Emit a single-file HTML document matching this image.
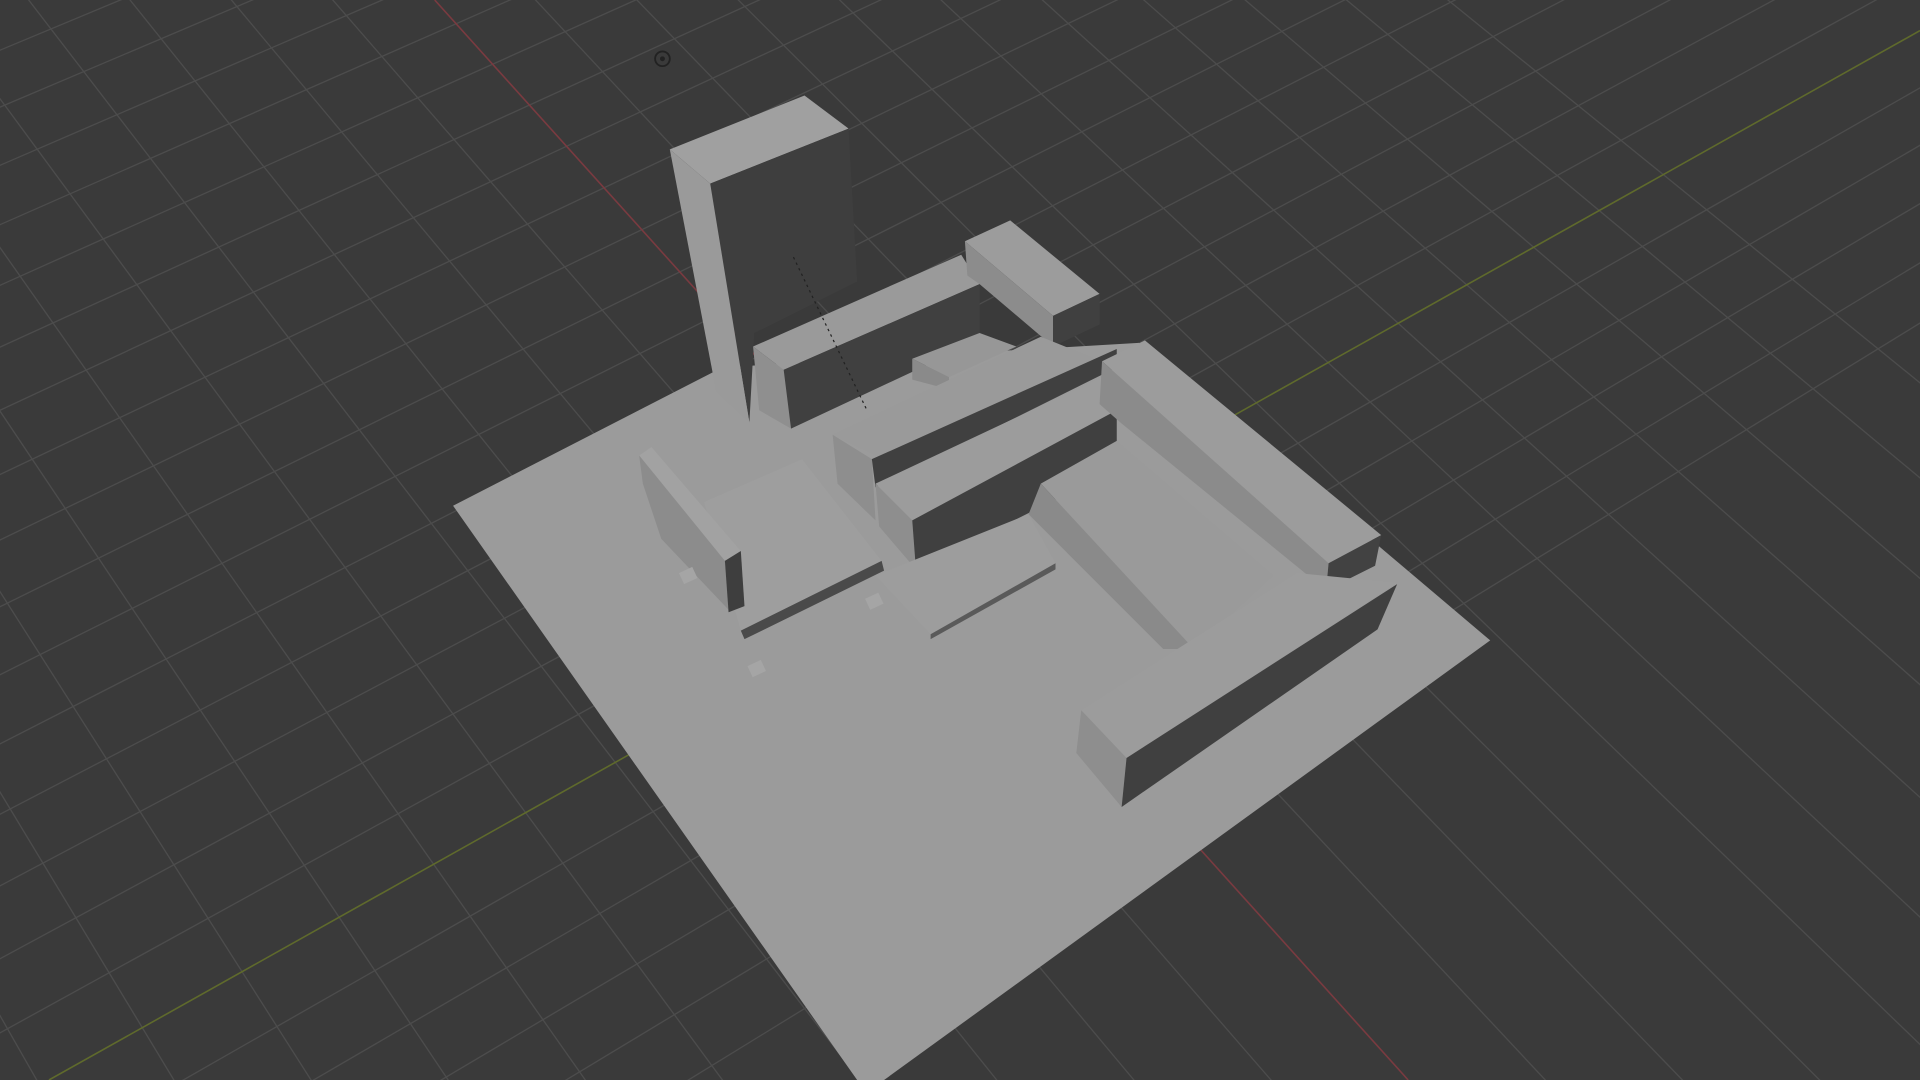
<!DOCTYPE html>
<html><head><meta charset="utf-8"><style>
html,body{margin:0;padding:0;background:#3a3a3a;overflow:hidden;width:1920px;height:1080px}
svg{position:absolute;left:0;top:0;display:block;width:1920px;height:1080px}
</style></head><body>
<svg id="s" viewBox="0 0 1568 882" preserveAspectRatio="none" xmlns="http://www.w3.org/2000/svg">
<rect width="1568" height="882" fill="#3a3a3a"/>
<g id="grid" stroke="#4c4c4c" stroke-width="1.1" fill="none"></g>
<line x1="355" y1="0" x2="1150" y2="882" stroke="#7a3a40" stroke-width="1.3"/>
<line x1="1568" y1="25" x2="40" y2="882" stroke="#5f6a2c" stroke-width="1.3"/>
<g stroke="none">
<polygon points="370,413 590,300 930,280 1217,523 722,882 700,882" fill="#9b9b9b"/>
<polygon points="547,122 657,78 693,105 580,150" fill="#a0a0a0"/>
<polygon points="580,150 693,105 700,230 616,272 612,345" fill="#3e3e3e"/>
<polygon points="547,122 580,150 612,345 585,320" fill="#9a9a9a"/>
<polygon points="615,283 785,208 800,232 640,302" fill="#9a9a9a"/>
<polygon points="615,283 640,302 646,350 620,335" fill="#8f8f8f"/>
<polygon points="640,302 800,232 800,278 646,350" fill="#404040"/>
<polygon points="788,197 825,180 898,240 860,258" fill="#9c9c9c"/>
<polygon points="788,197 860,258 860,283 800,232 790,225" fill="#8c8c8c"/>
<polygon points="860,258 898,240 898,265 860,283" fill="#404040"/>
<polygon points="745,293 800,272 830,283 775,308" fill="#979797"/>
<polygon points="745,293 775,308 775,318 745,310" fill="#8a8a8a"/>
<polygon points="680,355 850,275 912,300 742,385" fill="#9a9a9a"/>
<polygon points="680,355 712,375 715,425 684,395" fill="#8e8e8e"/>
<polygon points="712,375 912,285 912,300 715,398" fill="#404040"/>
<polygon points="715,395 900,308 912,335 745,425" fill="#9c9c9c"/>
<polygon points="715,395 745,425 748,465 718,430" fill="#8e8e8e"/>
<polygon points="745,425 912,335 912,383 748,465" fill="#404040"/>
<polygon points="715,470 840,420 862,460 760,518" fill="#9d9d9d"/>
<polygon points="760,518 862,460 862,465 760,522" fill="#5a5a5a"/>
<polygon points="850,395 912,360 1040,470 975,530" fill="#9a9a9a"/>
<polygon points="850,395 975,530 950,530 840,420" fill="#8a8a8a"/>
<polygon points="900,295 935,278 1128,437 1085,460" fill="#9c9c9c"/>
<polygon points="900,295 1085,460 1083,482 915,345 898,330" fill="#8b8b8b"/>
<polygon points="1085,460 1128,437 1123,462 1083,482" fill="#424242"/>
<polygon points="883,580 1059,468 1141,476 920,619" fill="#9c9c9c"/>
<polygon points="883,580 920,619 916,659 879,615" fill="#8e8e8e"/>
<polygon points="920,619 1141,477 1125,514 916,659" fill="#404040"/>
<polygon points="575,410 655,375 720,458 605,515" fill="#9e9e9e"/>
<polygon points="605,515 720,458 722,466 608,522" fill="#4a4a4a"/>
<polygon points="522,372 532,365 605,450 592,458" fill="#a2a2a2"/>
<polygon points="522,372 592,458 595,498 540,440 525,395" fill="#8c8c8c"/>
<polygon points="592,458 605,450 608,495 595,500" fill="#3e3e3e"/>
<rect x="612" y="541" width="12" height="10" fill="#a5a5a5" transform="rotate(-25 618 546)"/>
<rect x="708" y="486" width="12" height="10" fill="#a5a5a5" transform="rotate(-25 714 491)"/>
<rect x="556" y="465" width="12" height="10" fill="#a5a5a5" transform="rotate(-25 562 470)"/>
</g>
<line x1="648" y1="210" x2="708" y2="335" stroke="#222" stroke-width="1" stroke-dasharray="2,3"/>
<circle cx="541" cy="48" r="6" fill="none" stroke="#222" stroke-width="1.5"/>
<circle cx="541" cy="48" r="2" fill="#222"/>
</svg>
<script>
var g=document.getElementById('grid'),h='';
var V1=[-1900,-2500],V2=[6000,-2460];
function ln(a,b){var x2=a[0]+(b[0]-a[0])*3,y2=a[1]+(b[1]-a[1])*3;h+='<line x1="'+a[0]+'" y1="'+a[1]+'" x2="'+x2+'" y2="'+y2+'"/>';}
for(var k=-20;k<=10;k++){if(k==0)continue;ln(V1,[1150+112*k,882]);}
for(var k=-5;k<=28;k++){if(k==0)continue;var y=905-62*k+0.5*k*k;ln(V2,[0,y]);}
g.innerHTML=h;
</script>
</body></html>
